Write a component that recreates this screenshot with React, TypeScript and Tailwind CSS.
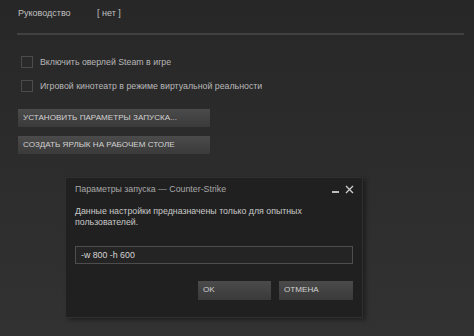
import React from "react";

const font = { fontFamily: '"Liberation Sans", Arial, sans-serif' };

function Checkbox({ label }: { label: string }) {
  return (
    <div className="flex items-center h-[12px]">
      <div className="w-[12px] h-[12px] border border-[#4b4b4b] bg-[#2a2a2a] ml-[21px]" />
      <span className="ml-[7px] text-[8.8px] text-[#b8b8b8] leading-none">{label}</span>
    </div>
  );
}

function SteamButton({ label, className = "" }: { label: string; className?: string }) {
  return (
    <div
      className={
        "flex items-center h-[18px] bg-gradient-to-b from-[#4b4b4b] to-[#3a3a3a] text-[8.1px] text-[#d2d2d2] leading-none " +
        className
      }
    >
      {label}
    </div>
  );
}

export default function App() {
  return (
    <div
      className="w-[474px] h-[336px] overflow-hidden bg-gradient-to-b from-[#272727] to-[#323232] flex flex-col"
      style={font}
    >
      <div className="flex items-center h-[10px] mt-[8px] text-[9px] text-[#c0c0c0] leading-none">
        <span className="ml-[18px] w-[79px]">Руководство</span>
        <span>[ нет ]</span>
      </div>
      <div className="ml-[17px] w-[447px] h-[2px] bg-[#414141] mt-[15px]" />
      <div className="mt-[21px]">
        <Checkbox label="Включить оверлей Steam в игре" />
      </div>
      <div className="mt-[12px]">
        <Checkbox label="Игровой кинотеатр в режиме виртуальной реальности" />
      </div>
      <SteamButton label="УСТАНОВИТЬ ПАРАМЕТРЫ ЗАПУСКА..." className="ml-[18px] w-[192px] pl-[5px] mt-[17px]" />
      <SteamButton label="СОЗДАТЬ ЯРЛЫК НА РАБОЧЕМ СТОЛЕ" className="ml-[18px] w-[192px] pl-[5px] mt-[9px]" />

      <div className="ml-[65px] mt-[23px] w-[298px] h-[141px] bg-[#202020] border border-[#2f2f2f] shadow-[3px_2px_4px_rgba(0,0,0,0.35)] flex flex-col px-[9px]">
        <div className="flex items-center justify-between h-[10px] mt-[6px]">
          <span className="text-[8.8px] text-[#a8a8a8] leading-none">Параметры запуска — Counter-Strike</span>
          <div className="flex items-center gap-[6px] mr-[-1px]">
            <div className="w-[7px] h-[1.5px] bg-[#bdbdbd] mt-[6px]" />
            <svg width="9" height="9" viewBox="0 0 9 9">
              <path d="M1 1 L8 8 M8 1 L1 8" stroke="#cfcfcf" strokeWidth="1.3" />
            </svg>
          </div>
        </div>
        <div className="mt-[12px] text-[8.8px] text-[#c8c8c8] leading-[10.5px]">
          Данные настройки предназначены только для опытных
          <br />
          пользователей.
        </div>
        <div className="mt-[19px] w-[278px] h-[18px] border border-[#4d4d4d] bg-[#242424] flex items-center pl-[5px] text-[8.8px] text-[#d4d4d4] leading-none">
          -w 800 -h 600
        </div>
        <div className="flex mt-[17px] ml-[123px] gap-[8px]">
          <SteamButton label="OK" className="w-[73px] h-[19px] pl-[5px]" />
          <SteamButton label="ОТМЕНА" className="w-[74px] h-[19px] pl-[5px]" />
        </div>
      </div>
    </div>
  );
}
